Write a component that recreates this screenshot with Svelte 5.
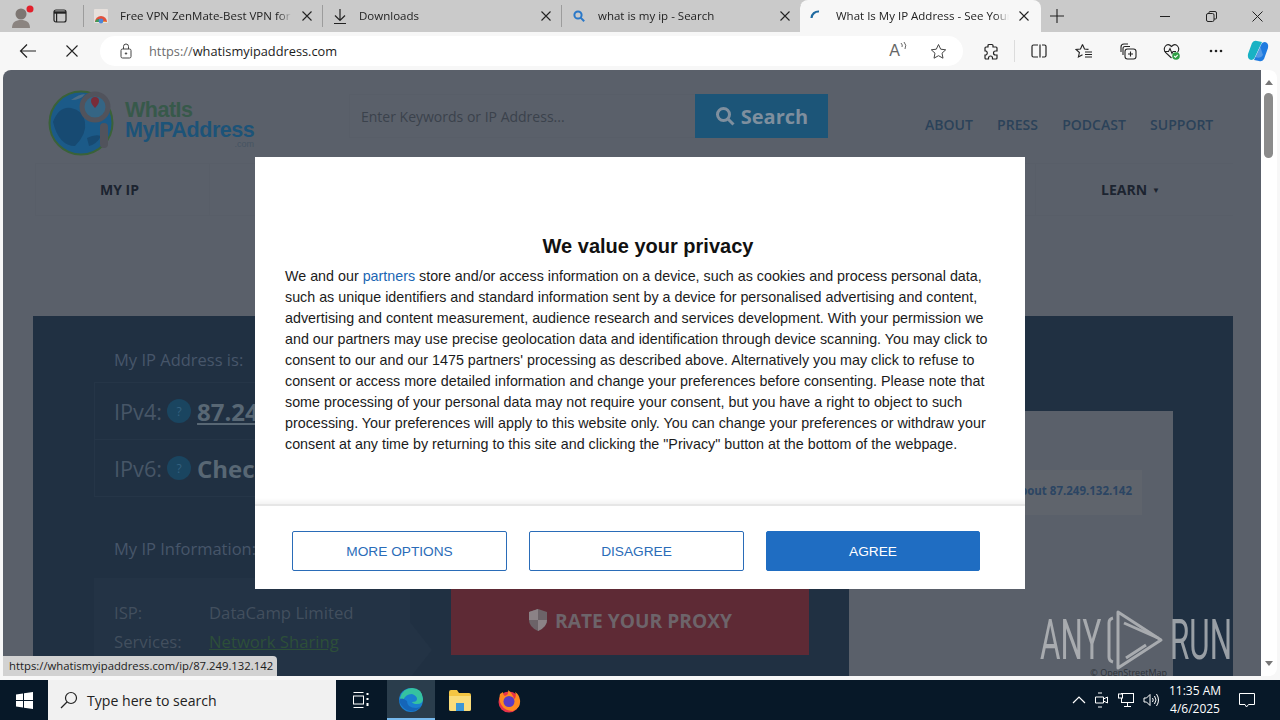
<script>
  const tabs = [
    { title: 'Free VPN ZenMate-Best VPN for Chrome', icon: 'chrome' },
    { title: 'Downloads', icon: 'download' },
    { title: 'what is my ip - Search', icon: 'search' }
  ];
  const lines = [
    'such as unique identifiers and standard information sent by a device for personalised advertising and content,',
    'advertising and content measurement, audience research and services development. With your permission we',
    'and our partners may use precise geolocation data and identification through device scanning. You may click to',
    "consent to our and our 1475 partners' processing as described above. Alternatively you may click to refuse to",
    'consent or access more detailed information and change your preferences before consenting. Please note that',
    'some processing of your personal data may not require your consent, but you have a right to object to such',
    'processing. Your preferences will apply to this website only. You can change your preferences or withdraw your',
    'consent at any time by returning to this site and clicking the "Privacy" button at the bottom of the webpage.'
  ];
</script>

<div class="screen">
  <header class="tabbar">
    <div class="profile">
      <svg width="24" height="26" viewBox="0 0 24 26"><circle cx="10" cy="11" r="5.5" fill="#7d7672"/><path d="M1 25c0-6 4-8 9-8s9 2 9 8z" fill="#8b8480"/><circle cx="19" cy="6" r="3.5" fill="#e2202c"/></svg>
    </div>
    <div class="tabactions">
      <svg width="14" height="14" viewBox="0 0 14 14" fill="none" stroke="#222" stroke-width="1.2"><rect x="1" y="1" width="12" height="12" rx="2"/><path d="M1 3.5h12" stroke-width="2.4"/><path d="M3.6 4v9"/></svg>
    </div>
    <span class="tabsep"></span>
    {#each tabs as tab}
      <div class="tab">
        <span class="favicon">
          {#if tab.icon === 'chrome'}
            <svg width="16" height="16" viewBox="0 0 16 16"><rect x="1" y="1" width="14" height="14" rx="1" fill="#e6e0dc"/><path d="M2 14a6 6 0 0 1 12 0z" fill="#e2513c"/><path d="M8 14a6 6 0 0 1 6 0z" fill="#f3c02f"/><path d="M2 14a4 4 0 0 1 4-3v3z" fill="#3d9a56"/><circle cx="8" cy="13" r="2.4" fill="#4a86d8"/></svg>
          {:else if tab.icon === 'download'}
            <svg width="16" height="18" viewBox="0 0 16 18" fill="none" stroke="#222" stroke-width="1.2"><path d="M8 2v11M3 8.5 8 13.5l5-5M2 16.5h12"/></svg>
          {:else}
            <svg width="14" height="14" viewBox="0 0 14 14" fill="none" stroke="#2a78c8" stroke-width="2"><circle cx="6" cy="6" r="3.6"/><path d="m8.6 8.6 3.6 3.6"/></svg>
          {/if}
        </span>
        <span class="tabtitle">{tab.title}</span>
        <svg class="tabx" width="10" height="10" viewBox="0 0 10 10" stroke="#222" stroke-width="1.1"><path d="M.5.5l9 9M9.5.5l-9 9"/></svg>
      </div>
      <span class="tabsep narrow"></span>
    {/each}
    <div class="tab active">
      <span class="favicon">
        <svg width="16" height="16" viewBox="0 0 16 16" fill="none" stroke="#1f6aa0" stroke-width="2.2"><path d="M2.5 10A7 7 0 0 1 10 3.5"/></svg>
      </span>
      <span class="tabtitle">What Is My IP Address - See Your Public IP</span>
      <svg class="tabx" width="10" height="10" viewBox="0 0 10 10" stroke="#222" stroke-width="1.1"><path d="M.5.5l9 9M9.5.5l-9 9"/></svg>
    </div>
    <div class="newtab">
      <svg width="14" height="14" viewBox="0 0 14 14" stroke="#222" stroke-width="1.1"><path d="M7 0v14M0 7h14"/></svg>
    </div>
    <div class="winbtns">
      <span class="winbtn"><svg width="10" height="10" viewBox="0 0 10 10" stroke="#222"><path d="M0 5.5h10"/></svg></span>
      <span class="winbtn"><svg width="11" height="11" viewBox="0 0 11 11" fill="none" stroke="#222"><rect x=".5" y="2.5" width="7.5" height="8" rx="1.5"/><path d="M3 2.5V1.5q0-1 1-1h5q1.500 0 1.500 1.500v5q0 1-1 1H8"/></svg></span>
      <span class="winbtn"><svg width="11" height="11" viewBox="0 0 11 11" stroke="#222"><path d="M.5.5l10 10M10.500.5l-10 10"/></svg></span>
    </div>
  </header>

  <nav class="toolbar">
    <span class="tool"><svg width="18" height="16" viewBox="0 0 18 16" fill="none" stroke="#222" stroke-width="1.2"><path d="M17 8H1.500M8 1.500 1.500 8 8 14.500"/></svg></span>
    <span class="tool"><svg width="12" height="12" viewBox="0 0 12 12" stroke="#222" stroke-width="1.1"><path d="M.5.5l11 11M11.500.5l-11 11"/></svg></span>
    <div class="urlbox">
      <svg class="lock" width="12" height="16" viewBox="0 0 12 16" fill="none" stroke="#444"><rect x="1" y="6" width="10" height="9" rx="1.500"/><path d="M3.500 6V3.500a2.500 2.500 0 0 1 5 0V6"/><circle cx="6" cy="10.500" r=".7" fill="#444"/></svg>
      <span class="url"><span class="urlscheme">https://</span>whatismyipaddress.com</span>
      <span class="urlicons">
        <span class="readaloud">A<svg width="7" height="9" viewBox="0 0 7 9" fill="none" stroke="#555" stroke-width=".9"><path d="M1 1q2 2 1 4M4 0q3 3 1 7"/></svg></span>
        <svg width="17" height="17" viewBox="0 0 17 17" fill="none" stroke="#444"><path d="m8.500 1.500 2.200 4.700 5 .6-3.700 3.400 1 5-4.500-2.500-4.500 2.500 1-5L1.300 6.800l5-.6z"/></svg>
      </span>
    </div>
    <span class="tool first"><svg width="16" height="17" viewBox="0 0 16 17" fill="none" stroke="#222" stroke-width="1.200"><path d="M6 1.500h3a1 1 0 0 1 1 1V4h3a1 1 0 0 1 1 1v3h-1.500a2 2 0 0 0 0 4H14v3a1 1 0 0 1-1 1H9.500v-1a2 2 0 0 0-4 0v1H3a1 1 0 0 1-1-1v-3h1a2.200 2.200 0 0 0 0-4H2V5a1 1 0 0 1 1-1h2V2.500a1 1 0 0 1 1-1z"/></svg></span>
    <span class="toolsep"></span>
    <span class="tool"><svg width="16" height="14" viewBox="0 0 16 14" fill="none" stroke="#222" stroke-width="1.200"><path d="M7 1H2.500Q1 1 1 2.500v9Q1 13 2.500 13H7M9 .5v13M11 1h2.500Q15 1 15 2.500v9q0 1.500-1.500 1.500H11"/></svg></span>
    <span class="tool favs"><svg width="18" height="17" viewBox="0 0 18 17" fill="none" stroke="#222" stroke-width="1.100"><path d="m7.500 1.500 2 4.500 4 .4M10 9h7M10 11.500h7M10 14h7M7.500 1.500 5.500 6 1 6.500l3.400 3-1 4.500 4.100-2.300"/></svg></span>
    <span class="tool"><svg width="17" height="17" viewBox="0 0 17 17" fill="none" stroke="#222" stroke-width="1.100"><path d="M3 12V5.500q0-2 2-2h5M1 9V4q0-3 3-3h4"/><rect x="5" y="6" width="11" height="10" rx="2.500"/><path d="M10.500 8.500v5M8 11h5"/></svg></span>
    <span class="tool"><svg width="18" height="17" viewBox="0 0 18 17" fill="none" stroke="#222" stroke-width="1.100"><path d="M8.500 15 2.500 9.500Q0 6 2.500 3t6 .5q3.500-3.500 6-.5t0 6.500"/><path d="M1.500 8.500h4l1.500-3 2 5 1-2h3"/><circle cx="13" cy="13" r="3.800" fill="#2f9e44" stroke="none"/><path d="m11.200 13 1.300 1.300 2.200-2.400" stroke="#fff"/></svg></span>
    <span class="tool"><svg width="14" height="4" viewBox="0 0 14 4" fill="#222"><circle cx="2" cy="2" r="1.300"/><circle cx="7" cy="2" r="1.300"/><circle cx="12" cy="2" r="1.300"/></svg></span>
    <span class="tool copilot"><svg width="24" height="24" viewBox="0 0 24 24"><path d="M6 4q2-3 5-2l5 1-7 15q-1 3-4 3Q1 20 2 15z" fill="#19b2c4"/><path d="M18 20q-2 3-5 2l-5-1 7-15q1-3 4-3 4 1 3 6z" fill="#1f7be0"/><path d="M9 18 14 7l3 9q-2 4-8 2z" fill="#f4f4f4" opacity=".25"/></svg></span>
  </nav>

  <main class="viewport">
    <div class="page">
      <div class="site-head">
        <div class="logo">
          <svg width="72" height="72" viewBox="0 0 72 72">
            <circle cx="34" cy="37" r="31.500" fill="#1b5a88" stroke="#3a6238" stroke-width="2"/>
            <path d="M6 36q6-16 18-14t14 14-10 24Q12 60 6 36zM40 52q8-4 14-2-4 8-12 10z" fill="#174a72"/>
            <path d="M24 14q8-6 14-6-4 6-14 6z" fill="#4c6d86"/>
            <circle cx="48" cy="21" r="13" fill="#356584" stroke="#51535c" stroke-width="5"/>
            <path d="M48 11a4 4 0 0 1 4 4q0 3-4 7-4-4-4-7a4 4 0 0 1 4-4z" fill="#7a2c38"/>
            <rect x="53" y="37" width="8" height="25" rx="4" fill="#51535c"/>
          </svg>
          <div class="logotext">
            <span class="logo1">WhatIs</span>
            <span class="logo2">MyIPAddress</span>
            <span class="logo3">.com</span>
          </div>
        </div>
        <div class="searchform">
          <span class="searchinput">Enter Keywords or IP Address...</span>
          <span class="searchbtn">
            <svg width="20" height="20" viewBox="0 0 20 20" fill="none" stroke="#7f8f9e" stroke-width="3"><circle cx="8.500" cy="8.500" r="6"/><path d="m13 13 5.500 5.500"/></svg>
            Search
          </span>
        </div>
        <div class="toplinks">
          <span>ABOUT</span><span>PRESS</span><span>PODCAST</span><span>SUPPORT</span>
        </div>
      </div>
      <div class="mainnav">
        <span class="navitem first">MY IP</span>
        <span class="navitem last">LEARN <i>▼</i></span>
      </div>
      <section class="panel">
        <div class="leftcol">
          <h3>My IP Address is:</h3>
          <div class="iprows">
            <div class="iprow"><span>IPv4:</span><b class="qm">?</b><strong class="link">87.249.132.142</strong></div>
            <div class="iprow"><span>IPv6:</span><b class="qm">?</b><strong>Check</strong></div>
          </div>
          <h3 class="info">My IP Information:</h3>
          <div class="infobox">
            <div><span>ISP:</span><span>DataCamp Limited</span></div>
            <div><span>Services:</span><a>Network Sharing</a></div>
          </div>
        </div>
        <div class="midcol">
          <div class="rate">
            <svg width="20" height="22" viewBox="0 0 20 22"><path d="M10 0l9 3v8q0 7-9 11-9-4-9-11V3z" fill="#6c6368"/><path d="M10 0v11H1V3zM10 11h9q0 7-9 11z" fill="#8b8286"/></svg>
            RATE YOUR PROXY
          </div>
        </div>
        <div class="rightcol">
          <span class="aboutbtn">Learn more about 87.249.132.142</span>
          <span class="osm">© OpenStreetMap</span>
        </div>
      </section>
    </div>
    <aside class="scrollbar">
      <span class="arrow up"></span>
      <span class="thumb"></span>
      <span class="arrow down"></span>
    </aside>

    <div class="statustip">https://whatismyipaddress.com/ip/87.249.132.142</div>

    <div class="modal">
      <div class="modalbody">
        <h2>We value your privacy</h2>
        <p>We and our <span class="partners">partners</span> store and/or access information on a device, such as cookies and process personal data,{#each lines as l}<br />{l}{/each}</p>
      </div>
      <div class="modalfoot">
        <button class="btn">MORE OPTIONS</button>
        <button class="btn">DISAGREE</button>
        <button class="btn primary">AGREE</button>
      </div>
    </div>

    <div class="anyrun">
      <span>ANY</span>
      <svg width="60" height="62" viewBox="0 0 60 62" fill="none" stroke="#c2c4c6" stroke-width="3" stroke-linejoin="round"><path d="M8 9Q4 10 4 14v34q0 4 4 5"/><path d="M13 3v56l43-28z"/><path d="M19 14l34 15M21 49l20-13"/></svg>
      <span>RUN</span>
    </div>
  </main>

  <footer class="taskbar">
    <span class="start"><svg width="17" height="17" viewBox="0 0 17 17" fill="#fff"><path d="M0 2.500 7 1.500V8H0zM8 1.300 17 0v8H8zM0 9h7v6.500l-7-1zM8 9h9v8l-9-1.300z"/></svg></span>
    <div class="tasksearch">
      <svg width="18" height="18" viewBox="0 0 18 18" fill="none" stroke="#222" stroke-width="1.200"><circle cx="11" cy="7" r="5.500"/><path d="M7 11 1 17"/></svg>
      <span>Type here to search</span>
    </div>
    <span class="taskitem"><svg width="16" height="16" viewBox="0 0 16 16" fill="none" stroke="#fff"><path d="M.5 .5h10M.5 15.500h10"/><rect x=".5" y="4" width="10" height="8"/><path d="M14.500 1v2M14.500 6v2M14.500 11v3" stroke-width="2"/></svg></span>
    <span class="taskitem edge"><svg width="26" height="26" viewBox="0 0 26 26"><circle cx="13" cy="13" r="12" fill="#1a7fd0"/><path d="M2 11Q5 1 14 1q10 0 11 11 0 5-6 5-4 0-5-2 5 0 5-3t-5-5Q7 7 5 14z" fill="#35c2a0"/><path d="M9 14q0 7 9 7 3 0 5-2-4 6-11 5T1 14q2-5 8 0z" fill="#1565b8"/></svg></span>
    <span class="taskitem"><svg width="24" height="22" viewBox="0 0 24 22"><path d="M1 3q0-2 2-2h6l2 3h10q2 0 2 2v14q0 2-2 2H3q-2 0-2-2z" fill="#f4c542"/><path d="M1 7h22v13q0 2-2 2H3q-2 0-2-2z" fill="#fadc7a"/><rect x="8" y="14" width="8" height="8" fill="#3b96d6"/></svg></span>
    <span class="taskitem fox"><svg width="24" height="25" viewBox="0 0 24 25"><circle cx="12" cy="14" r="10.500" fill="#e8334a"/><path d="M3 6q-1 4 0 8 3 9 13 9 8-3 7-11-1-6-5-8 2 5-1 7-1-5-6-9 1 5-3 6-2-1-2-4z" fill="#ff8a1f"/><circle cx="12" cy="13.500" r="5.500" fill="#5b3bc4"/></svg></span>
    <div class="tray">
      <svg width="14" height="8" viewBox="0 0 14 8" fill="none" stroke="#fff" stroke-width="1.200"><path d="M1 7l6-6 6 6"/></svg>
      <svg width="14" height="16" viewBox="0 0 14 16" fill="none" stroke="#fff"><path d="M3 1h4M3 15h4M.5 5v6h8V5zM8.500 7l4-2v6l-4-2"/></svg>
      <svg width="16" height="14" viewBox="0 0 16 14" fill="none" stroke="#fff"><rect x="3.500" y=".5" width="12" height="9"/><path d="M9.500 10v3M6 13.500h7"/><rect x=".5" y="1" width="4" height="4" fill="#071828"/></svg>
      <svg width="16" height="14" viewBox="0 0 16 14" fill="none" stroke="#fff"><path d="M1 5v4h2.500L7 12.500v-11L3.500 5zM9.500 5q1.500 2 0 4M11.500 3q3 4 0 8M13.500 1q4 6 0 12"/></svg>
      <div class="clock"><span>11:35 AM</span><span>4/6/2025</span></div>
      <svg class="notif" width="16" height="15" viewBox="0 0 16 15" fill="none" stroke="#fff"><path d="M.5.500h15v11H9.500L7.500 14 6 11.500H.5z"/></svg>
    </div>
  </footer>
</div>

<style>
  :global(body) { margin: 0; }
  .screen { width: 1280px; height: 720px; overflow: hidden; display: flex; flex-direction: column; background: #f7f7f7; font-family: "Open Sans", sans-serif; color: #222; }

  .tabbar { height: 32px; flex: none; background: #cacaca; display: flex; align-items: center; }
  .profile { width: 44px; padding-left: 11px; box-sizing: border-box; display: flex; }
  .tabactions { width: 32px; margin-right: 7px; display: flex; justify-content: center; }
  .tabsep { width: 1px; height: 22px; background: #9c9c9c; flex: none; }
  .tab { width: 238px; height: 32px; box-sizing: border-box; flex: none; display: flex; align-items: center; padding: 0 10px 0 9px; font-size: 11.5px; position: relative; }
  .favicon { width: 16px; display: flex; justify-content: center; margin-right: 11px; flex: none; }
  .tabtitle { flex: 1; white-space: nowrap; overflow: hidden; margin-right: 10px; padding-bottom: 1px; color: #222; mask-image: linear-gradient(to left, transparent, #000 14px); }
  .tabx { flex: none; }
  .tab.active { width: 241px; background: #f7f7f7; border-radius: 8px 8px 0 0; margin-left: -1px; padding: 0 12px 0 9px; }
  .newtab { width: 33px; display: flex; justify-content: center; margin-left: -1px; }
  .winbtns { margin-left: auto; display: flex; }
  .winbtn { width: 46px; display: flex; justify-content: center; }

  .toolbar { height: 38px; flex: none; display: flex; align-items: center; padding-left: 6px; background: #f7f7f7; }
  .tool { width: 44px; display: flex; justify-content: center; flex: none; }
  .tool.first { margin-left: 6px; }
  .tool.favs { margin-left: 1px; }
  .tool.copilot { width: 40px; }
  .toolsep { width: 1px; height: 22px; background: #dcdcdc; margin: 0 2px 0 1px; flex: none; }
  .urlbox { width: 863px; height: 30px; margin-left: 6px; background: #fff; border-radius: 15px; display: flex; align-items: center; box-sizing: border-box; padding-left: 20px; flex: none; }
  .url { margin-left: 17px; font-size: 12.8px; color: #1c1c1c; }
  .urlscheme { color: #6d6d6d; }
  .urlicons { margin-left: auto; margin-right: 16px; display: flex; align-items: center; gap: 23px; }
  .readaloud { font-size: 16px; color: #666; display: flex; align-items: flex-start; font-family: "Liberation Sans", sans-serif; }

  .viewport { height: 606px; flex: none; position: relative; display: flex; padding-left: 3px; }
  .page { width: 1258px; height: 606px; background: #5a606a; border-radius: 8px 0 0 0; overflow: hidden; flex: none; display: flex; flex-direction: column; }
  .scrollbar { width: 16px; flex: none; position: relative; display: flex; flex-direction: column; align-items: center; padding: 10px 1px 0 0; box-sizing: border-box; height: 606px; background: #fff; border-radius: 0 8px 8px 0; }
  .arrow { width: 0; height: 0; border-left: 4px solid transparent; border-right: 4px solid transparent; }
  .arrow.up { border-bottom: 5px solid #777; }
  .arrow.down { border-top: 5px solid #777; margin-top: auto; margin-bottom: 10px; }
  .thumb { width: 9px; height: 65px; background: #8b8b8b; border-radius: 5px; margin-top: 8px; }

  .site-head { height: 93px; display: flex; flex: none; }
  .logo { display: flex; width: 346px; padding: 16px 0 0 44px; box-sizing: border-box; flex: none; }
  .logotext { display: flex; flex-direction: column; margin-left: 6px; padding-top: 14px; font-family: "Liberation Sans", sans-serif; font-weight: 700; font-size: 21.5px; line-height: 20px; letter-spacing: -.5px; }
  .logo1 { color: #37594a; }
  .logo2 { color: #1c5378; }
  .logo3 { font-size: 9px; color: #465462; align-self: flex-end; font-weight: 400; line-height: 9px; letter-spacing: 0; margin-top: 0; }
  .searchform { display: flex; margin-top: 24px; height: 44px; flex: none; }
  .searchinput { width: 346px; box-sizing: border-box; padding-left: 11px; font-size: 14px; line-height: 44px; color: #3b424c; border: 1px solid #585e68; border-right: 0; }
  .searchbtn { width: 133px; background: #1c5578; color: #7f8f9e; font-weight: 700; font-size: 20px; display: flex; align-items: center; justify-content: center; gap: 6px; }
  .toplinks { display: flex; gap: 24.3px; margin: 46px 0 0 97px; font-size: 14px; font-weight: 600; color: #2b4259; line-height: 18px; }

  .mainnav { height: 53px; margin: 0 28px 0 32px; flex: none; display: flex; justify-content: space-between; font-size: 14px; font-weight: 700; color: #1c2430; box-sizing: border-box; border-top: 1px solid #585e68; border-bottom: 1px solid #585e68; }
  .navitem { display: flex; align-items: center; gap: 4px; box-sizing: border-box; }
  .navitem.first { width: 175px; padding-left: 64px; border: 1px solid #585e68; border-width: 0 1px; }
  .navitem.last { width: 198px; padding-left: 65px; border-left: 1px solid #585e68; }
  .navitem i { font-size: 8px; font-style: normal; margin-left: 1px; }

  .panel { flex: 1; margin: 100px 28px 0 30px; background: #203042; display: grid; grid-template-columns: 355px 400px 324px; padding: 0 60px 0 61px; position: relative; min-height: 0; }
  .leftcol { color: #47566a; padding-top: 32px; }
  h3 { margin: 0; font-size: 16.5px; font-weight: 400; padding-left: 20px; line-height: 24px; }
  .iprows { margin-top: 10px; border: 1px solid #253547; width: 340px; }
  .iprow { height: 56px; display: flex; align-items: center; padding-left: 19px; font-size: 21.7px; color: #475667; white-space: nowrap; }
  .iprow + .iprow { border-top: 1px solid #253547; }
  .iprow strong { color: #586774; font-size: 24px; margin-left: 6px; }
  .iprow strong.link { text-decoration: underline; }
  .qm { width: 24px; height: 24px; border-radius: 50%; background: #1a4560; color: #34617f; margin-left: 5px; font-size: 12px; font-weight: 400; display: flex; align-items: center; justify-content: center; }
  h3.info { margin-top: 40px; }
  .infobox { margin-top: 17px; width: 316px; padding: 20px 0 0 20px; box-sizing: border-box; font-size: 16.7px; color: #424f5e; background: #233345; height: 100px; position: relative; }
  .infobox::after { content: ""; position: absolute; right: -22px; top: 44px; border-left: 22px solid #233345; border-top: 28px solid transparent; border-bottom: 28px solid transparent; }
  .infobox div { display: flex; height: 29px; align-items: center; }
  .infobox span:first-child { width: 95px; }
  .infobox a { color: #2d4f39; text-decoration: underline; }
  .midcol { padding: 273px 0 0 0; }
  .rate { width: 358px; height: 66px; box-sizing: border-box; padding-bottom: 4px; background: #5e2a35; color: #6d646a; font-weight: 700; font-size: 19.2px; display: flex; align-items: center; justify-content: center; gap: 7px; margin-left: 2px; }
  .rightcol { background: #5a606a; margin-top: 95px; position: relative; }
  .aboutbtn { position: absolute; right: 31px; top: 59px; height: 45px; box-sizing: border-box; padding: 0 10px 4px; background: #5f646c; color: #2b4563; font-size: 11.5px; font-weight: 700; display: flex; align-items: center; white-space: nowrap; }
  .osm { position: absolute; right: 6px; bottom: 0; font-size: 9px; color: #2d3238; line-height: 10px; }

  .statustip { position: absolute; left: 3px; bottom: 0; width: 274px; height: 20px; box-sizing: border-box; padding-left: 6px; background: #d2d2d2; border-radius: 0 4px 0 0; font-size: 11.3px; line-height: 20px; color: #1c1c1c; white-space: nowrap; }

  .modal { position: absolute; left: 255px; top: 87px; width: 770px; height: 432px; background: #fff; display: flex; flex-direction: column; font-family: "Liberation Sans", sans-serif; }
  .modalbody { height: 349px; padding: 76px 30px 0; box-sizing: border-box; border-bottom: 2px solid #e6e6e6; background: linear-gradient(to top, #f3f3f3, #fff 6px); }
  h2 { margin: 0; padding-left: 16px; text-align: center; font-size: 20px; line-height: 26px; color: #111; font-weight: 700; }
  p { margin: 7px 0 0; font-size: 14.3px; line-height: 21px; color: #1b1b1b; white-space: nowrap; }
  .partners { color: #1b66b3; }
  .modalfoot { flex: 1; display: grid; grid-template-columns: 215px 215px 214px; column-gap: 22px; padding: 25px 0 0 37px; align-content: start; }
  .btn { height: 40px; background: #fff; border: 1px solid #2a6cb8; border-radius: 2px; color: #2a6cb8; font: 400 13.7px "Liberation Sans", sans-serif; padding: 0; }
  .btn.primary { background: #1f6dc2; border-color: #1f6dc2; color: #fff; }

  .anyrun { position: absolute; right: 50px; bottom: 5px; display: flex; align-items: center; gap: 5px; color: #c2c4c6; opacity: .75; font-family: "Roboto", sans-serif; font-size: 56px; line-height: 62px; font-weight: 400; }
  .anyrun span { display: inline-block; width: 60px; white-space: nowrap; transform-origin: left center; transform: scaleX(.56); }

  .taskbar { margin-top: 4px; height: 40px; flex: none; background: #071828; display: flex; align-items: center; color: #fff; }
  .start { width: 48px; display: flex; justify-content: center; flex: none; }
  .tasksearch { width: 288px; height: 40px; background: #f1f1f1; box-sizing: border-box; padding-left: 12px; display: flex; align-items: center; gap: 9px; color: #222; font-size: 14.1px; flex: none; }
  .taskitem { width: 50px; height: 40px; display: flex; align-items: center; justify-content: center; flex: none; box-sizing: border-box; }
  .taskitem.edge { width: 48px; margin-left: 1px; background: #2a3d4c; border-bottom: 2px solid #76b9ed; padding-top: 2px; }
  .taskitem.fox { margin-left: -1px; }
  .tray { margin-left: auto; display: flex; align-items: center; gap: 9px; height: 40px; padding-right: 25px; }
  .clock { display: flex; flex-direction: column; align-items: center; font-size: 12px; line-height: 18px; width: 58px; margin-left: -2px; white-space: nowrap; }
  .notif { margin-left: 6px; }
</style>
